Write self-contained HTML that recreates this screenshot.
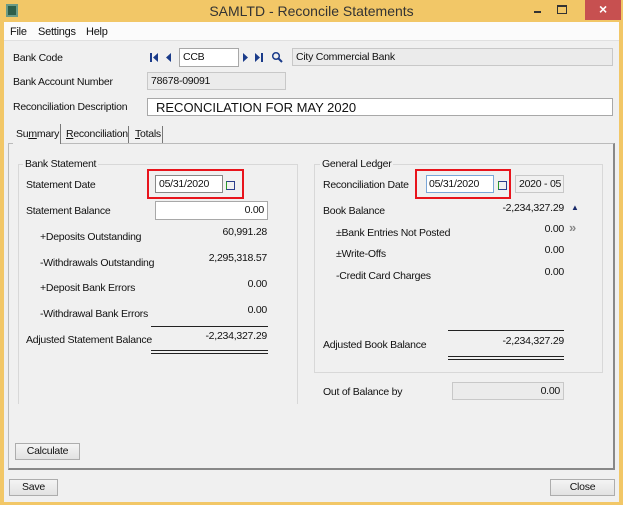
<!DOCTYPE html>
<html><head><style>
*{box-sizing:border-box;margin:0;padding:0}
body{width:623px;height:505px;overflow:hidden;background:#f2c767;font-family:"Liberation Sans",sans-serif;font-size:10.5px;letter-spacing:-0.25px;color:#111;position:relative}
.a{position:absolute;white-space:nowrap}
.in{position:absolute;background:#fff;border:1px solid #a8a8a8;white-space:nowrap}
.ro{position:absolute;background:#ebebeb;border:1px solid #c8c8c8;white-space:nowrap}
.r{text-align:right}
.btn{position:absolute;background:linear-gradient(#f4f4f4,#e2e2e2);border:1px solid #adadad;text-align:center;line-height:15px}
.hl{position:absolute;height:1px;background:#222}
.red{position:absolute;border:2px solid #e8141c}
.sq{position:absolute;width:9px;height:9px;border:1px solid #2a3d8c;border-left-color:#2a9a2a}
</style></head><body>
<div class="a" style="left:0;top:0;width:623px;height:22px;background:#f2c767"></div>
<div class="a" style="left:6px;top:4px;width:12px;height:13px;background:#2d5e4a;border:2px solid #6a9a86"></div>
<div class="a" style="left:0;top:3px;width:623px;text-align:center;font-size:14px;letter-spacing:0;color:#333">SAMLTD - Reconcile Statements</div>
<div class="a" style="left:534px;top:11px;width:7px;height:2px;background:#333"></div>
<div class="a" style="left:557px;top:5px;width:10px;height:9px;border:1px solid #333;border-top-width:2px"></div>
<div class="a" style="left:585px;top:0;width:36px;height:20px;background:#c75050;color:#fff;text-align:center;font-size:14px;font-weight:bold;line-height:19px">×</div>
<div class="a" style="left:4px;top:22px;width:615px;height:480px;background:#f0f0f0"></div>
<div class="a" style="left:4px;top:22px;width:615px;height:19px;background:#fbfbfb;border-bottom:1px solid #e0e0e0"></div>
<div class="a" style="left:10px;top:26px;font-size:11px">File</div>
<div class="a" style="left:38px;top:26px;font-size:11px">Settings</div>
<div class="a" style="left:86px;top:26px;font-size:11px">Help</div>

<div class="a" style="left:13px;top:52px">Bank Code</div>
<svg class="a" style="left:150px;top:53px" width="24" height="9" viewBox="0 0 24 9"><rect x="0" y="0" width="2" height="9" fill="#1a3b8a"/><path d="M8 0L3 4.5L8 9Z M21 0L16 4.5L21 9Z" fill="#1a3b8a"/></svg>
<div class="in" style="left:179px;top:48px;width:60px;height:19px;padding:2px 3px">CCB</div>
<svg class="a" style="left:243px;top:53px" width="24" height="9" viewBox="0 0 24 9"><path d="M0 0L5 4.5L0 9Z M12 0L17 4.5L12 9Z" fill="#1a3b8a"/><rect x="18" y="0" width="2" height="9" fill="#1a3b8a"/></svg>
<svg class="a" style="left:271px;top:51px" width="12" height="12" viewBox="0 0 12 12"><circle cx="5" cy="5" r="3.3" fill="none" stroke="#1a3b8a" stroke-width="1.5"/><path d="M7.5 7.5L11 11" stroke="#1a3b8a" stroke-width="2"/></svg>
<div class="ro" style="left:292px;top:48px;width:321px;height:18px;padding:2px 3px">City Commercial Bank</div>
<div class="a" style="left:13px;top:76px">Bank Account Number</div>
<div class="ro" style="left:147px;top:72px;width:139px;height:18px;padding:2px 3px">78678-09091</div>
<div class="a" style="left:13px;top:101px">Reconciliation Description</div>
<div class="in" style="left:147px;top:98px;width:466px;height:18px;padding:1px 8px;font-size:13px;letter-spacing:0">RECONCILATION FOR MAY 2020</div>

<div class="a" style="left:8px;top:143px;width:607px;height:327px;border:1px solid #bbb;border-right:2px solid #888;border-bottom:2px solid #888"></div>
<div class="a" style="left:13px;top:124px;width:48px;height:20px;background:#f0f0f0;border-right:1px solid #777;padding:4px 3px">Su<u>m</u>mary</div>
<div class="a" style="left:63px;top:126px;width:66px;height:17px;border-right:1px solid #777;padding:2px 3px"><u>R</u>econciliation</div>
<div class="a" style="left:131px;top:126px;width:32px;height:17px;border-right:1px solid #777;padding:2px 4px"><u>T</u>otals</div>

<div class="a" style="left:18px;top:164px;width:280px;height:240px;border:1px solid #d8d8d8;border-bottom:none"></div>
<div class="a" style="left:23px;top:158px;background:#f0f0f0;padding:0 2px">Bank Statement</div>
<div class="a" style="left:26px;top:179px">Statement Date</div>
<div class="red" style="left:147px;top:169px;width:97px;height:30px"></div>
<div class="in" style="left:155px;top:175px;width:68px;height:18px;padding:2px 3px;border-color:#888">05/31/2020</div>
<div class="sq" style="left:226px;top:181px"></div>
<div class="a" style="left:26px;top:205px">Statement Balance</div>
<div class="in" style="left:155px;top:201px;width:113px;height:19px;padding:2px 3px;text-align:right">0.00</div>
<div class="a" style="left:40px;top:231px">+Deposits Outstanding</div><div class="a r" style="left:160px;top:226px;width:107px">60,991.28</div>
<div class="a" style="left:40px;top:257px">-Withdrawals Outstanding</div><div class="a r" style="left:160px;top:252px;width:107px">2,295,318.57</div>
<div class="a" style="left:40px;top:282px">+Deposit Bank Errors</div><div class="a r" style="left:160px;top:278px;width:107px">0.00</div>
<div class="a" style="left:40px;top:308px">-Withdrawal Bank Errors</div><div class="a r" style="left:160px;top:304px;width:107px">0.00</div>
<div class="hl" style="left:151px;top:326px;width:117px"></div>
<div class="a" style="left:26px;top:334px">Adjusted Statement Balance</div><div class="a r" style="left:160px;top:330px;width:107px">-2,234,327.29</div>
<div class="hl" style="left:151px;top:350px;width:117px"></div><div class="hl" style="left:151px;top:353px;width:117px"></div>

<div class="a" style="left:314px;top:164px;width:289px;height:209px;border:1px solid #d8d8d8"></div>
<div class="a" style="left:320px;top:158px;background:#f0f0f0;padding:0 2px">General Ledger</div>
<div class="a" style="left:323px;top:179px">Reconciliation Date</div>
<div class="red" style="left:415px;top:169px;width:96px;height:30px"></div>
<div class="in" style="left:426px;top:175px;width:68px;height:18px;padding:2px 2px;border-color:#7aa6d8">05/31/2020</div>
<div class="sq" style="left:498px;top:181px"></div>
<div class="ro" style="left:515px;top:175px;width:49px;height:18px;padding:2px 3px;background:#f0f0f0">2020 - 05</div>
<div class="a" style="left:323px;top:205px">Book Balance</div><div class="a r" style="left:450px;top:202px;width:114px">-2,234,327.29</div>
<div class="a" style="left:571px;top:203px;color:#1a2b6a;font-size:8px">▲</div>
<div class="a" style="left:336px;top:227px">±Bank Entries Not Posted</div><div class="a r" style="left:450px;top:223px;width:114px">0.00</div>
<div class="a" style="left:569px;top:220px;color:#888;font-weight:bold;font-size:13px">»</div>
<div class="a" style="left:336px;top:248px">±Write-Offs</div><div class="a r" style="left:450px;top:244px;width:114px">0.00</div>
<div class="a" style="left:336px;top:270px">-Credit Card Charges</div><div class="a r" style="left:450px;top:266px;width:114px">0.00</div>
<div class="hl" style="left:448px;top:330px;width:116px"></div>
<div class="a" style="left:323px;top:339px">Adjusted Book Balance</div><div class="a r" style="left:450px;top:335px;width:114px">-2,234,327.29</div>
<div class="hl" style="left:448px;top:356px;width:116px"></div><div class="hl" style="left:448px;top:359px;width:116px"></div>
<div class="a" style="left:323px;top:386px">Out of Balance by</div>
<div class="ro" style="left:452px;top:382px;width:112px;height:18px;padding:2px 3px;text-align:right">0.00</div>

<div class="btn" style="left:15px;top:443px;width:65px;height:17px">Calculate</div>
<div class="btn" style="left:9px;top:479px;width:49px;height:17px">Save</div>
<div class="btn" style="left:550px;top:479px;width:65px;height:17px">Close</div>
</body></html>
